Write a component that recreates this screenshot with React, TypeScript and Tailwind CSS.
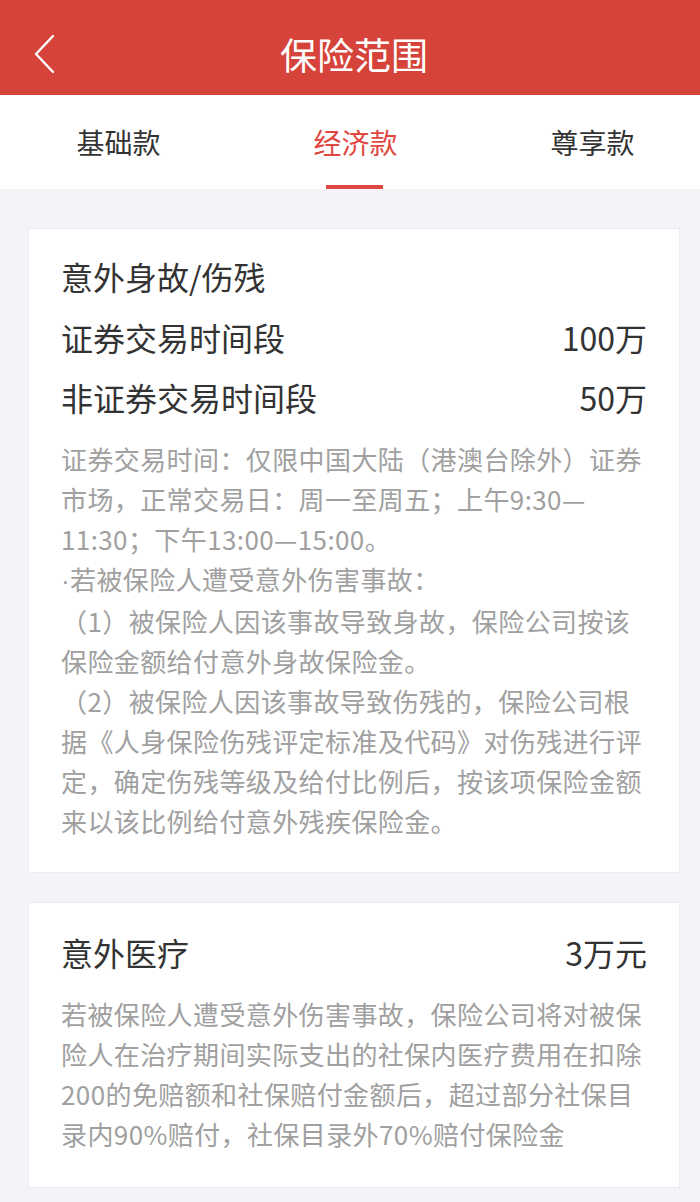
import React from "react";

const font = { fontFamily: '"PingFang SC", "Noto Sans CJK SC", "Noto Sans", sans-serif' };

function Row({ label, value }: { label: string; value?: string }) {
  return (
    <div className="flex items-center justify-between h-[40px] text-[32px] leading-[40px] text-[#333333]">
      <span>{label}</span>
      {value && <span>{value}</span>}
    </div>
  );
}

function Desc({ lines }: { lines: React.ReactNode[] }) {
  return (
    <div className="text-[26px] leading-[40px] tracking-[0.4px] text-[#a0a0a0] whitespace-nowrap">
      {lines.map((l, i) => (
        <div key={i}>{l}</div>
      ))}
    </div>
  );
}

export default function App() {
  return (
    <div className="w-[700px] min-h-[1202px] bg-[#f4f4f8] overflow-hidden" style={font}>
      <header className="relative h-[95px] bg-[#d5433b] flex items-center justify-center pt-[12px] pl-[8px]">
        <svg
          className="absolute left-[32px] top-[34px]"
          width="26"
          height="40"
          viewBox="0 0 26 40"
          fill="none"
        >
          <path d="M21 2 L4 20 L21 38" stroke="#ffffff" strokeWidth="2.4" strokeLinecap="round" strokeLinejoin="round" />
        </svg>
        <h1 className="text-[37px] leading-[40px] text-white">保险范围</h1>
      </header>

      <nav className="flex h-[94px] bg-white">
        <div className="w-[237px] shrink-0 flex items-center justify-center text-[28px] text-[#333333]">基础款</div>
        <div className="relative w-[237px] shrink-0 flex items-center justify-center text-[28px] text-[#e04741]">
          经济款
          <span className="absolute bottom-0 left-[89px] w-[57px] h-[4px] bg-[#e04741]" />
        </div>
        <div className="w-[237px] shrink-0 flex items-center justify-center text-[28px] text-[#333333]">尊享款</div>
      </nav>

      <main className="pl-[28px] pr-[20px] pt-[39px] pb-[14px] flex flex-col gap-[29px]">
        <section className="bg-white border border-[#ebebf0] px-[32px] pt-[27px] pb-[31px]">
          <Row label="意外身故/伤残" />
          <div className="mt-[21px]">
            <Row label="证券交易时间段" value="100万" />
          </div>
          <div className="mt-[20px]">
            <Row label="非证券交易时间段" value="50万" />
          </div>
          <div className="mt-[22px]">
            <Desc
              lines={[
                "证券交易时间：仅限中国大陆（港澳台除外）证券",
                "市场，正常交易日：周一至周五；上午9:30—",
                "11:30；下午13:00—15:00。",
                <>
                  <span style={{ fontFamily: '"Liberation Sans", sans-serif' }}>·</span>若被保险人遭受意外伤害事故：
                </>,
                "（1）被保险人因该事故导致身故，保险公司按该",
                "保险金额给付意外身故保险金。",
                "（2）被保险人因该事故导致伤残的，保险公司根",
                "据《人身保险伤残评定标准及代码》对伤残进行评",
                "定，确定伤残等级及给付比例后，按该项保险金额",
                "来以该比例给付意外残疾保险金。",
              ]}
            />
          </div>
        </section>

        <section className="bg-white border border-[#ebebf0] px-[32px] pt-[29px] pb-[33px]">
          <Row label="意外医疗" value="3万元" />
          <div className="mt-[22px]">
            <Desc
              lines={[
                "若被保险人遭受意外伤害事故，保险公司将对被保",
                "险人在治疗期间实际支出的社保内医疗费用在扣除",
                "200的免赔额和社保赔付金额后，超过部分社保目",
                "录内90%赔付，社保目录外70%赔付保险金",
              ]}
            />
          </div>
        </section>
      </main>
    </div>
  );
}
